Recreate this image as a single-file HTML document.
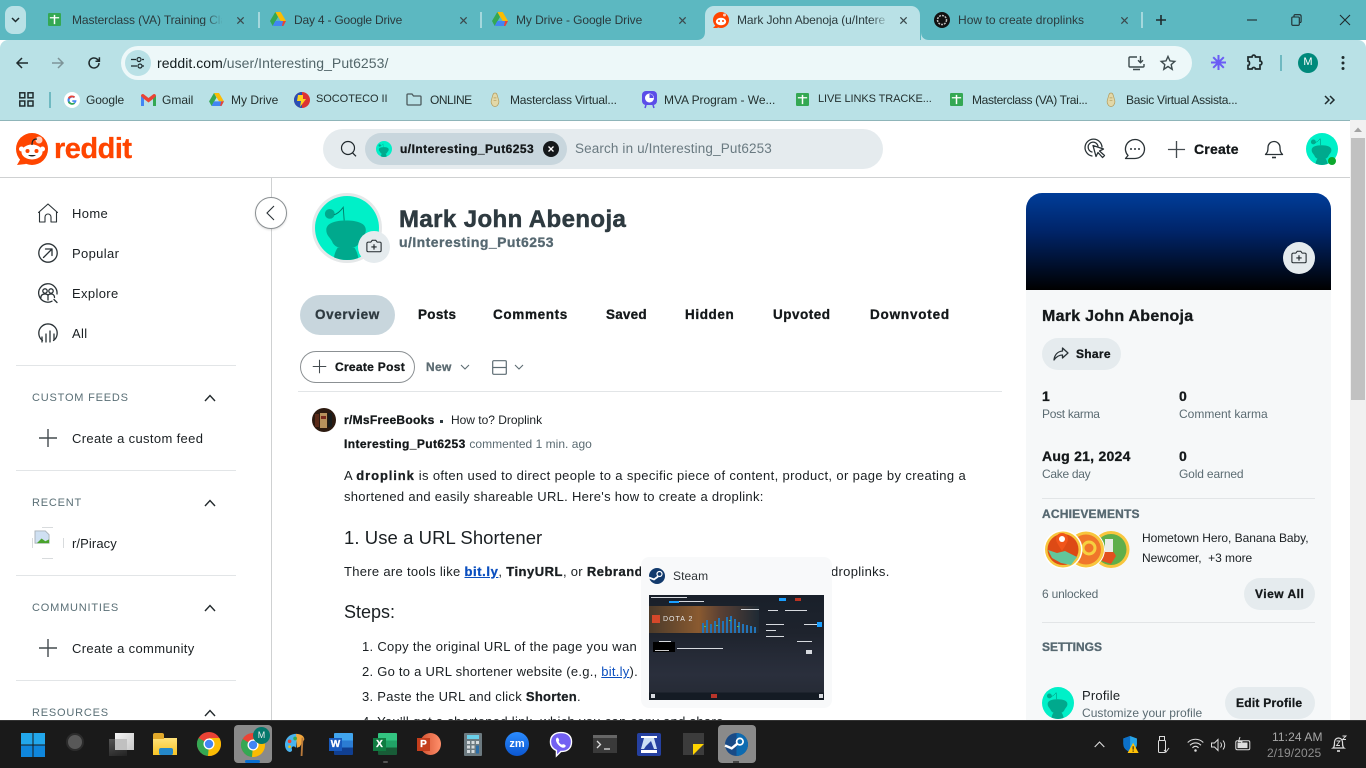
<!DOCTYPE html>
<html><head><meta charset="utf-8"><title>Mark John Abenoja</title>
<style>
*{box-sizing:border-box}
html,body{margin:0;padding:0;width:1366px;height:768px;overflow:hidden;background:#fff;font-family:"Liberation Sans","DejaVu Sans",sans-serif;color:#1a1f22}
.t{position:absolute;white-space:nowrap;line-height:1}
.a{position:absolute}
svg{position:absolute;overflow:visible}
.b,b{font-weight:700;-webkit-text-stroke:.3px currentColor}
.tab{font-size:12px;color:#2b3a3d}
.bm{font-size:12px;color:#23302f}
.nav{font-size:13px;color:#1a1f22;letter-spacing:.35px}
.sec{font-size:11px;color:#5a6f76;letter-spacing:.8px}
.hr{position:absolute;background:#e2e5e7;height:1px}
.lbl{font-size:12px;color:#5b6b72;letter-spacing:0}
.num{font-size:14px;font-weight:700;color:#14181a;-webkit-text-stroke:.3px #14181a}
.body{font-size:13px;color:#1a1f22;letter-spacing:.28px}
.pill{position:absolute;border-radius:20px;background:#e5ebee}
.ic{fill:none;stroke:#2a3236;stroke-width:1.3;stroke-linecap:round;stroke-linejoin:round}
</style></head><body>
<svg width="0" height="0" style="position:absolute"><defs>
<clipPath id="cc"><circle cx="34" cy="34" r="34"/></clipPath>
<symbol id="snoo" viewBox="0 0 68 68">
<circle cx="34" cy="34" r="34" fill="#00f0c8"/>
<circle cx="15.700" cy="19" r="5.200" fill="#00a98d"/>
<path d="M20 20C24 19 27 16 30 12L31 26" fill="none" stroke="#00806c" stroke-width="1"/>
<g clip-path="url(#cc)"><path d="M12 36C12 29 21 26 33 26C45 26 54 29 54 36C54 42 50 44 48 48C46 54 40 56 33 56C26 56 20 54 18 48C16 44 12 42 12 36z" fill="#00a98d"/>
<path d="M24 55C21 60 20 64 20 68H46C46 64 45 60 42 55z" fill="#00a98d"/></g>
</symbol>
<symbol id="sheet" viewBox="0 0 14 14"><rect width="14" height="14" rx="1.2" fill="#34a853"/><path d="M6.2 2v10h1.6V5.8H12V4.4H7.8V2zM2 4.4h4.2v1.4H2z" fill="#fff"/></symbol>
<symbol id="drive" viewBox="0 0 16 14"><path d="M5.3 0h5.4l5.3 9h-5.3z" fill="#fbbc04"/><path d="M5.3 0 0 9l2.7 5 5.3-9z" fill="#34a853"/><path d="M2.7 14h10.600l2.700-5H5.300z" fill="#4285f4"/><path d="M12 14h1.300l2.700-5h-3z" fill="#ea4335"/></symbol>
<symbol id="cam" viewBox="0 0 18 16"><path d="M1 4.500c0-.8.6-1.400 1.400-1.400h3L7 1h4l1.600 2.100h3c.8 0 1.400.6 1.400 1.400v8c0 .8-.6 1.400-1.400 1.400H2.400c-.8 0-1.400-.6-1.400-1.400z" fill="none" stroke="#20282c" stroke-width="1.200"/><path d="M9 5.500v6M6 8.500h6" stroke="#20282c" stroke-width="1.300"/></symbol>
<symbol id="plus" viewBox="0 0 20 20"><path d="M10 1v18M1 10h18" stroke="#444b4f" stroke-width="1.400"/></symbol>
<symbol id="up" viewBox="0 0 12 8"><path d="M1 7l5-5.500L11 7" fill="none" stroke="#22292c" stroke-width="1.400"/></symbol>
<symbol id="down" viewBox="0 0 10 6"><path d="M1 1l4 4 4-4" fill="none" stroke="#5d6c73" stroke-width="1.100"/></symbol>
<symbol id="x" viewBox="0 0 10 10"><path d="M1.500 1.500l7 7M8.500 1.500l-7 7" stroke="#3b4a4d" stroke-width="1.400"/></symbol>
<symbol id="gem" viewBox="0 0 20 22"><path d="M10 1c3 0 3 3 4 6 1 4 3 7 0 11-2 3-6 3-8 0-3-4-1-7 0-11 1-3 1-6 4-6z" fill="#e2d8a8" stroke="#b39b5b"/><path d="M8 8h4M8 12h4" stroke="#b39b5b"/></symbol>
</defs></svg>

<!-- TAB STRIP -->
<div class="a" style="left:0;top:0;width:1366px;height:40px;background:#5cb8c1"></div>
<div class="a" style="left:5px;top:6px;width:21px;height:28px;background:#b9e1e6;border-radius:8px"></div>
<svg style="left:11px;top:17px" width="9" height="6" viewBox="0 0 9 6"><path d="M1 1l3.500 3.500L8 1" fill="none" stroke="#1f2b2d" stroke-width="1.500"/></svg>
<svg style="left:48px;top:12px" width="13" height="15"><use href="#sheet" width="13" height="15"/></svg>
<div class="t tab" style="left:72px;top:14px;width:150px;overflow:hidden;letter-spacing:-.1px">Masterclass (VA) Training Cla</div>
<div class="a" style="left:205px;top:10px;width:18px;height:20px;background:linear-gradient(90deg,rgba(92,184,193,0),#5cb8c1)"></div>
<svg style="left:236px;top:16px" width="9" height="9"><use href="#x" width="9" height="9"/></svg>
<div class="a" style="left:258px;top:12px;width:2px;height:16px;background:#a5d8dd"></div>
<svg style="left:270px;top:12px" width="16" height="14"><use href="#drive" width="16" height="14"/></svg>
<div class="t tab" style="left:294px;top:14px;letter-spacing:-.2px">Day 4 - Google Drive</div>
<svg style="left:459px;top:16px" width="9" height="9"><use href="#x" width="9" height="9"/></svg>
<div class="a" style="left:480px;top:12px;width:2px;height:16px;background:#a5d8dd"></div>
<svg style="left:492px;top:12px" width="16" height="14"><use href="#drive" width="16" height="14"/></svg>
<div class="t tab" style="left:516px;top:14px;letter-spacing:-.08px">My Drive - Google Drive</div>
<svg style="left:678px;top:16px" width="9" height="9"><use href="#x" width="9" height="9"/></svg>
<!-- active tab -->
<div class="a" style="left:705px;top:6px;width:215px;height:34px;background:#b9e1e6;border-radius:9px 9px 0 0"></div>
<svg style="left:697px;top:32px" width="232" height="8"><path d="M0 8c5 0 8-3 8-8v8zM232 8c-5 0-8-3-8-8v8z" fill="#b9e1e6"/></svg>
<svg style="left:713px;top:12px" width="16" height="16" viewBox="0 0 16 16"><circle cx="8" cy="8" r="8" fill="#ff4500"/><path d="M0 16l3-3 2 3z" fill="#ff4500"/><ellipse cx="8" cy="9.500" rx="5.200" ry="3.800" fill="#fff"/><circle cx="6" cy="9" r="1" fill="#ff4500"/><circle cx="10" cy="9" r="1" fill="#ff4500"/><circle cx="11.500" cy="3" r="1.500" fill="#ffd0c0"/></svg>
<div class="t tab" style="left:737px;top:14px;width:152px;overflow:hidden;letter-spacing:-.1px">Mark John Abenoja (u/Intere</div>
<div class="a" style="left:870px;top:10px;width:20px;height:20px;background:linear-gradient(90deg,rgba(185,225,230,0),#b9e1e6)"></div>
<svg style="left:899px;top:16px" width="9" height="9"><use href="#x" width="9" height="9"/></svg>
<svg style="left:934px;top:12px" width="16" height="16" viewBox="0 0 16 16"><circle cx="8" cy="8" r="8" fill="#111"/><circle cx="8" cy="8" r="4.500" fill="none" stroke="#bbb" stroke-width="1.500" stroke-dasharray="2 1"/></svg>
<div class="t tab" style="left:958px;top:14px;letter-spacing:.03px">How to create droplinks</div>
<svg style="left:1120px;top:16px" width="9" height="9"><use href="#x" width="9" height="9"/></svg>
<div class="a" style="left:1141px;top:12px;width:2px;height:16px;background:#a5d8dd"></div>
<svg style="left:1155px;top:14px" width="12" height="12"><path d="M6 1v10M1 6h10" stroke="#1f2b2d" stroke-width="1.600"/></svg>
<svg style="left:1247px;top:14px" width="60" height="14"><path d="M0 6h10" stroke="#1f2b2d" stroke-width="1.100"/></svg>
<svg style="left:1291px;top:14px" width="12" height="12"><rect x=".8" y="3" width="7.500" height="8.300" rx="1" fill="none" stroke="#1f2b2d" stroke-width="1.100"/><path d="M3 3V1.800C3 1 3.500.7 4 .7h4.500c1 0 1.600.6 1.600 1.600v5.200c0 .6-.5 1-1.200 1" fill="none" stroke="#1f2b2d" stroke-width="1.100"/></svg>
<svg style="left:1339px;top:14px" width="12" height="12"><path d="M1 1l10 10M11 1L1 11" stroke="#1f2b2d" stroke-width="1.100"/></svg>

<!-- TOOLBAR -->
<div class="a" style="left:0;top:40px;width:1366px;height:80px;background:#b9e1e6;border-radius:8px 8px 0 0"></div>
<svg style="left:15px;top:56px" width="14" height="14"><path d="M13 7H2M7 2 2 7l5 5" fill="none" stroke="#1f2b2d" stroke-width="1.500"/></svg>
<svg style="left:51px;top:56px" width="14" height="14"><path d="M1 7h11M7 2l5 5-5 5" fill="none" stroke="#7d9498" stroke-width="1.500"/></svg>
<svg style="left:87px;top:56px" width="14" height="14"><path d="M12 7a5 5 0 1 1-1.600-3.700L12.200 5M12.400 1.300v3.900H8.500" fill="none" stroke="#1f2b2d" stroke-width="1.500"/></svg>
<div class="a" style="left:121px;top:46px;width:1071px;height:34px;background:#edf8f9;border-radius:17px"></div>
<div class="a" style="left:125px;top:50px;width:26px;height:26px;background:#b9e1e6;border-radius:13px"></div>
<svg style="left:131px;top:57px" width="14" height="12"><path d="M0 2.500h5M11 9h2M0 9h6M11 2.500h2" stroke="#1f2b2d" stroke-width="1.200"/><circle cx="8" cy="2.500" r="2" fill="none" stroke="#1f2b2d" stroke-width="1.200"/><circle cx="9" cy="9" r="2" fill="none" stroke="#1f2b2d" stroke-width="1.200"/></svg>
<div class="t" style="left:157px;top:56px;font-size:14px;color:#121c1e;letter-spacing:.05px">reddit.com<span style="color:#52666a">/user/Interesting_Put6253/</span></div>
<svg style="left:1128px;top:55px" width="17" height="16"><path d="M9 2H2a1 1 0 0 0-1 1v8a1 1 0 0 0 1 1h13a1 1 0 0 0 1-1V9M5 14.500h7M12.500 1v6.500M10 5.200l2.500 2.500L15 5.200" fill="none" stroke="#3c4a4d" stroke-width="1.400"/></svg>
<svg style="left:1160px;top:55px" width="16" height="16"><path d="M8 1.500l2 4.400 4.800.5-3.600 3.200 1 4.700L8 11.500l-4.200 2.800 1-4.700L1.200 6.400 6 5.900z" fill="none" stroke="#3c4a4d" stroke-width="1.400"/></svg>
<svg style="left:1210px;top:54px" width="17" height="17" viewBox="0 0 17 17"><g stroke="#6a5cf5" stroke-width="2"><path d="M8.500 1v15M1 8.500h15M3.200 3.200l10.600 10.600M13.800 3.200 3.200 13.800"/></g><circle cx="8.500" cy="8.500" r="3" fill="#6a5cf5"/></svg>
<svg style="left:1246px;top:54px" width="17" height="17"><path d="M2 3h4c0-2.500 3.500-2.500 3.500 0h4.500v4c2.500 0 2.500 4 0 4v4H9.500c0-2-3.500-2-3.500 0H2v-3.500c2 0 2-4.500 0-4.500z" fill="none" stroke="#1f2b2d" stroke-width="1.700"/></svg>
<div class="a" style="left:1280px;top:55px;width:2px;height:16px;background:#6fb9c1"></div>
<div class="a" style="left:1298px;top:53px;width:20px;height:20px;border-radius:50%;background:#00897b"></div>
<div class="t" style="left:1298px;top:57px;width:20px;text-align:center;font-size:11px;color:#fff">M</div>
<svg style="left:1341px;top:55px" width="4" height="16"><circle cx="2" cy="2.500" r="1.500" fill="#1f2b2d"/><circle cx="2" cy="8" r="1.500" fill="#1f2b2d"/><circle cx="2" cy="13.500" r="1.500" fill="#1f2b2d"/></svg>

<!-- BOOKMARKS -->
<svg style="left:19px;top:92px" width="15" height="15"><g fill="none" stroke="#1f2b2d" stroke-width="1.500"><rect x=".8" y=".8" width="5" height="5"/><rect x="9" y=".8" width="5" height="5"/><rect x=".8" y="9" width="5" height="5"/><rect x="9" y="9" width="5" height="5"/></g></svg>
<div class="a" style="left:49px;top:92px;width:2px;height:16px;background:#6fb9c1"></div>
<svg style="left:64px;top:92px" width="16" height="16" viewBox="0 0 16 16"><circle cx="8" cy="8" r="8" fill="#fff"/><path d="M12.500 8.200H8.300v1.700h2.400a2.800 2.800 0 1 1-.8-3.900l1.200-1.200A4.500 4.500 0 1 0 12.500 8.200z" fill="#4285f4"/><path d="M4 5.800A4.500 4.500 0 0 1 11.100 4.800L9.900 6A2.800 2.800 0 0 0 5.500 7z" fill="#ea4335"/><path d="M3.900 10.200 5.300 9a2.800 2.800 0 0 0 4.400 1.500l1.200 1.200a4.500 4.500 0 0 1-7-1.500z" fill="#34a853"/></svg>
<div class="t bm" style="left:86px;top:94px;letter-spacing:-.1px">Google</div>
<svg style="left:141px;top:94px" width="15" height="12" viewBox="0 0 15 12"><path d="M0 2v10h3V5l4.500 3.500L12 5v7h3V2c0-2-2-2.500-3-1.500L7.500 4 3 .5C2-.5 0 0 0 2z" fill="#ea4335"/><path d="M0 2v10h3V5z" fill="#4285f4"/><path d="M12 5v7h3V2z" fill="#34a853"/></svg>
<div class="t bm" style="left:162px;top:94px">Gmail</div>
<svg style="left:209px;top:93px" width="15" height="13"><use href="#drive" width="15" height="13"/></svg>
<div class="t bm" style="left:231px;top:94px">My Drive</div>
<svg style="left:294px;top:92px" width="16" height="16" viewBox="0 0 16 16"><circle cx="8" cy="8" r="8" fill="#d33"/><path d="M0 8a8 8 0 0 1 8-8v16A8 8 0 0 1 0 8z" fill="#2a4fb5"/><path d="M4 3h5v4h3l-6 8 1-6H3z" fill="#ffd21f"/></svg>
<div class="t bm" style="left:316px;top:94px;font-size:11px;letter-spacing:-.05px">SOCOTECO II</div>
<svg style="left:406px;top:93px" width="16" height="13"><path d="M1 2c0-.5.3-1 1-1h4l1.500 2H14c.6 0 1 .4 1 1v7c0 .6-.4 1-1 1H2c-.6 0-1-.4-1-1z" fill="none" stroke="#4c5a5d" stroke-width="1.300"/></svg>
<div class="t bm" style="left:430px;top:94px;letter-spacing:-.5px">ONLINE</div>
<svg style="left:488px;top:92px" width="14" height="16"><use href="#gem" width="14" height="16"/></svg>
<div class="t bm" style="left:510px;top:94px;letter-spacing:-.2px">Masterclass Virtual...</div>
<svg style="left:641px;top:91px" width="17" height="17" viewBox="0 0 17 17"><rect x="1" y="0" width="15" height="14" rx="4" fill="#5b4de8"/><circle cx="8.500" cy="7" r="4.500" fill="#fff"/><path d="M8.500 7V3a4 4 0 0 1 4 4z" fill="#5b4de8"/><path d="M5 14l-1 3M12 14l1 3" stroke="#5b4de8" stroke-width="1.500"/></svg>
<div class="t bm" style="left:664px;top:94px;letter-spacing:-.05px">MVA Program - We...</div>
<svg style="left:796px;top:92px" width="13" height="15"><use href="#sheet" width="13" height="15"/></svg>
<div class="t bm" style="left:818px;top:94px;font-size:11px;letter-spacing:-.08px">LIVE LINKS TRACKE...</div>
<svg style="left:950px;top:92px" width="13" height="15"><use href="#sheet" width="13" height="15"/></svg>
<div class="t bm" style="left:972px;top:94px;letter-spacing:-.35px">Masterclass (VA) Trai...</div>
<svg style="left:1104px;top:92px" width="14" height="16"><use href="#gem" width="14" height="16"/></svg>
<div class="t bm" style="left:1126px;top:94px;letter-spacing:-.27px">Basic Virtual Assista...</div>
<svg style="left:1324px;top:95px" width="12" height="10"><path d="M1 1l4 4-4 4M6 1l4 4-4 4" fill="none" stroke="#1f2b2d" stroke-width="1.500"/></svg>

<!-- REDDIT HEADER -->
<div class="a" style="left:0;top:120px;width:1350px;height:1px;background:#8fb5b9"></div>
<div class="a" style="left:0;top:177px;width:1350px;height:1px;background:#cfd1d2"></div>
<svg style="left:16px;top:133px" width="32" height="32" viewBox="0 0 32 32"><circle cx="16" cy="16" r="16" fill="#ff4500"/><path d="M1 32l4-7 5 6z" fill="#ff4500"/><ellipse cx="16" cy="19" rx="10.500" ry="7.500" fill="#fff"/><circle cx="5.500" cy="16" r="2.500" fill="#fff"/><circle cx="26.500" cy="16" r="2.500" fill="#fff"/><circle cx="11.500" cy="18" r="2" fill="#ff4500"/><circle cx="20.500" cy="18" r="2" fill="#ff4500"/><path d="M12 22c2 2 6 2 8 0z" fill="#222"/><circle cx="23" cy="7" r="3.500" fill="#ffd0c0"/><path d="M16 12c0-4 1-6 5-6" fill="none" stroke="#222" stroke-width="1.200"/></svg>
<div class="t b" style="left:54px;top:135px;font-size:29px;color:#ff4500;letter-spacing:-.5px">reddit</div>

<div class="a" style="left:323px;top:129px;width:560px;height:40px;border-radius:20px;background:#e5ebee"></div>
<svg style="left:340px;top:140px" width="18" height="18"><circle cx="8" cy="8" r="6.500" fill="none" stroke="#20282c" stroke-width="1.200"/><path d="M12.500 12.800l3.500 3.500" stroke="#20282c" stroke-width="1.200"/></svg>
<div class="a" style="left:365px;top:133px;width:202px;height:32px;border-radius:16px;background:#c8d6dd"></div>
<svg style="left:376px;top:141px" width="16" height="16"><use href="#snoo" width="16" height="16"/></svg>
<div class="t b" style="left:400px;top:143px;font-size:12px;color:#14181a;letter-spacing:.45px">u/Interesting_Put6253</div>
<div class="a" style="left:543px;top:141px;width:16px;height:16px;border-radius:50%;background:#14181a"></div>
<svg style="left:548px;top:146px" width="6" height="6"><path d="M.5.500l5 5M5.500.500l-5 5" stroke="#fff" stroke-width="1.300"/></svg>
<div class="t" style="left:575px;top:142px;font-size:13.500px;color:#6a7a81;letter-spacing:.13px">Search in u/Interesting_Put6253</div>

<svg style="left:1084px;top:138px" width="22" height="22" viewBox="0 0 22 22"><g class="ic"><path d="M8 18a8.500 8.500 0 1 1 10-9"/><path d="M8 14a5 5 0 1 1 6-6"/><path d="M9 7.500l3 11 2-4 4.500 5 2-2-5-4.500 4-2z"/></g></svg>
<svg style="left:1124px;top:138px" width="22" height="22" viewBox="0 0 22 22"><path class="ic" d="M11 1.500a9.500 9.500 0 1 1 0 19H1.500l2.500-3A9.500 9.500 0 0 1 11 1.500z"/><circle cx="7" cy="11" r="1" fill="#2a3236"/><circle cx="11" cy="11" r="1" fill="#2a3236"/><circle cx="15" cy="11" r="1" fill="#2a3236"/></svg>
<svg style="left:1167px;top:140px" width="19" height="19"><use href="#plus" width="19" height="19"/></svg>
<div class="t b" style="left:1194px;top:142px;font-size:14px;color:#14181a;letter-spacing:.2px">Create</div>
<svg style="left:1264px;top:139px" width="20" height="20" viewBox="0 0 20 20"><path class="ic" d="M1.500 15.500c2-2 2.500-3.500 2.500-7a6 6 0 0 1 12 0c0 3.500.5 5 2.500 7z"/><path d="M8 18.500h4" stroke="#2a3236" stroke-width="1.600"/></svg>
<svg style="left:1306px;top:133px" width="32" height="32"><use href="#snoo" width="32" height="32"/></svg>
<div class="a" style="left:1328px;top:157px;width:8px;height:8px;border-radius:50%;background:#0ca82d"></div>

<!-- SIDEBAR -->
<div class="a" style="left:271px;top:178px;width:1px;height:542px;background:#cfd1d2"></div>
<div class="a" style="left:255px;top:197px;width:32px;height:32px;border-radius:50%;background:#fff;border:1px solid #8b9093;box-shadow:0 1px 2px rgba(0,0,0,.15)"></div>
<svg style="left:266px;top:205px" width="9" height="16"><path d="M8 1 1 8l7 7" fill="none" stroke="#2a3236" stroke-width="1.100"/></svg>
<svg style="left:38px;top:203px" width="20" height="20" viewBox="0 0 20 20"><path class="ic" style="stroke-width:1.100" d="M.5 9.500 10 1l9.500 8.500M1.500 9v10h5.500v-5a3 3 0 0 1 6 0v5h5.500V9"/></svg>
<div class="t nav" style="left:72px;top:207px">Home</div>
<svg style="left:38px;top:243px" width="20" height="20" viewBox="0 0 20 20"><circle class="ic" cx="10" cy="10" r="9.200"/><path class="ic" d="M5.500 14.500l8.500-8.500M7.500 6H14v6.500"/></svg>
<div class="t nav" style="left:72px;top:247px">Popular</div>
<svg style="left:38px;top:283px" width="20" height="20" viewBox="0 0 20 20"><path class="ic" d="M14 18.200A9.200 9.200 0 1 1 19 11"/><circle class="ic" cx="7" cy="8" r="2.200"/><circle class="ic" cx="13" cy="8" r="2.200"/><path class="ic" d="M2.800 15c0-3 2-4 4.200-4 1.300 0 2.300.4 3 1.200.7-.8 1.700-1.200 3-1.200 2.200 0 3.500 1.400 3.500 3.500M10 12.500V17M16 16.500l3 3"/></svg>
<div class="t nav" style="left:72px;top:287px">Explore</div>
<svg style="left:38px;top:323px" width="20" height="20" viewBox="0 0 20 20"><path class="ic" d="M4.500 17.500a9.200 9.200 0 1 1 11 0"/><path class="ic" d="M4 14v5M8 11v8M12 8v11M16 11v6"/></svg>
<div class="t nav" style="left:72px;top:327px">All</div>
<div class="hr" style="left:16px;top:365px;width:220px"></div>
<div class="t sec" style="left:32px;top:393px">CUSTOM FEEDS</div>
<svg style="left:204px;top:394px" width="12" height="8"><use href="#up" width="12" height="8"/></svg>
<svg style="left:38px;top:428px" width="20" height="20"><use href="#plus" width="20" height="20"/></svg>
<div class="t nav" style="left:72px;top:432px">Create a custom feed</div>
<div class="hr" style="left:16px;top:470px;width:220px"></div>
<div class="t sec" style="left:32px;top:498px">RECENT</div>
<svg style="left:204px;top:499px" width="12" height="8"><use href="#up" width="12" height="8"/></svg>
<svg style="left:32px;top:527px" width="32" height="32"><path d="M10 .5h11M10 31.500h11M.5 11v10M31.500 11v10" stroke="#d8dbdd" stroke-width="1" fill="none"/></svg>
<svg style="left:34px;top:530px" width="17" height="15" viewBox="0 0 18 16"><path d="M1 1h11l4 4v9H1z" fill="#cfe0f2" stroke="#a9b2b8"/><path d="M3 14l5-5 4 3 4-2v4z" fill="#4aa32c"/></svg>
<div class="t nav" style="left:72px;top:537px;letter-spacing:.1px">r/Piracy</div>
<div class="hr" style="left:16px;top:575px;width:220px"></div>
<div class="t sec" style="left:32px;top:603px">COMMUNITIES</div>
<svg style="left:204px;top:604px" width="12" height="8"><use href="#up" width="12" height="8"/></svg>
<svg style="left:38px;top:638px" width="20" height="20"><use href="#plus" width="20" height="20"/></svg>
<div class="t nav" style="left:72px;top:642px">Create a community</div>
<div class="hr" style="left:16px;top:680px;width:220px"></div>
<div class="t sec" style="left:32px;top:708px">RESOURCES</div>
<svg style="left:204px;top:709px" width="12" height="8"><use href="#up" width="12" height="8"/></svg>

<!-- PROFILE HEAD -->
<div class="a" style="left:312px;top:193px;width:70px;height:70px;border-radius:50%;background:#e5e8e9"></div>
<svg style="left:315px;top:196px" width="64" height="64"><use href="#snoo" width="64" height="64"/></svg>
<div class="a" style="left:358px;top:231px;width:32px;height:32px;border-radius:50%;background:#e5ebee"></div>
<svg style="left:366px;top:239px" width="16" height="15"><use href="#cam" width="16" height="15"/></svg>
<div class="t b" style="left:399px;top:208px;font-size:24px;color:#2e3a40;letter-spacing:.4px;-webkit-text-stroke:.5px #2e3a40">Mark John Abenoja</div>
<div class="t b" style="left:399px;top:235px;font-size:14px;color:#566871;letter-spacing:.45px">u/Interesting_Put6253</div>

<div class="pill" style="left:300px;top:295px;width:95px;height:40px;background:#c8d6dd"></div>
<div class="t b" style="left:315px;top:308px;font-size:13.500px;color:#2e3a40;letter-spacing:.6px">Overview</div>
<div class="t b" style="left:418px;top:308px;font-size:13.500px;color:#14181a;letter-spacing:.3px">Posts</div>
<div class="t b" style="left:493px;top:308px;font-size:13.500px;color:#14181a;letter-spacing:.65px">Comments</div>
<div class="t b" style="left:606px;top:308px;font-size:13.500px;color:#14181a;letter-spacing:.2px">Saved</div>
<div class="t b" style="left:685px;top:308px;font-size:13.500px;color:#14181a;letter-spacing:.6px">Hidden</div>
<div class="t b" style="left:773px;top:308px;font-size:13.500px;color:#14181a;letter-spacing:.5px">Upvoted</div>
<div class="t b" style="left:870px;top:308px;font-size:13.500px;color:#14181a;letter-spacing:.8px">Downvoted</div>

<div class="a" style="left:300px;top:351px;width:115px;height:32px;border-radius:16px;border:1px solid #8b9093;background:#fff"></div>
<svg style="left:312px;top:359px" width="15" height="15"><use href="#plus" width="15" height="15"/></svg>
<div class="t b" style="left:335px;top:361px;font-size:12px;color:#14181a;letter-spacing:.3px">Create Post</div>
<div class="t b" style="left:426px;top:361px;font-size:12px;color:#5d6c73;letter-spacing:.3px">New</div>
<svg style="left:460px;top:364px" width="10" height="6"><use href="#down" width="10" height="6"/></svg>
<svg style="left:492px;top:360px" width="15" height="15"><rect x=".7" y=".7" width="13.600" height="13.600" rx="1" fill="none" stroke="#5d6c73" stroke-width="1.200"/><path d="M.7 7.500h13.600" stroke="#5d6c73" stroke-width="1.200"/></svg>
<svg style="left:514px;top:364px" width="10" height="6"><use href="#down" width="10" height="6"/></svg>
<div class="hr" style="left:298px;top:391px;width:704px"></div>

<!-- POST -->
<svg style="left:312px;top:408px" width="24" height="24" viewBox="0 0 24 24"><circle cx="12" cy="12" r="12" fill="#2c1a10"/><rect x="8" y="5" width="7" height="15" fill="#b8925c"/><rect x="9" y="8" width="5" height="3" fill="#7a2a1c"/><rect x="3" y="6" width="4" height="13" fill="#5a2a18"/><rect x="16" y="5" width="4" height="14" fill="#181c1c"/></svg>
<div class="t b" style="left:344px;top:414px;font-size:12px;color:#14181a;letter-spacing:.3px">r/MsFreeBooks</div>
<div class="a" style="left:440px;top:420px;width:3px;height:3px;background:#2e3a40"></div>
<div class="t" style="left:451px;top:414px;font-size:12px;color:#1a1f22;letter-spacing:-.02px">How to? Droplink</div>
<div class="t b" style="left:344px;top:438px;font-size:12px;color:#14181a;letter-spacing:.4px">Interesting_Put6253 <span style="font-weight:400;color:#5b6b72;letter-spacing:.02px;-webkit-text-stroke:0">commented 1 min. ago</span></div>
<div class="t body" style="left:344px;top:469px;letter-spacing:.36px">A <b style="letter-spacing:.9px">droplink</b> is often used to direct people to a specific piece of content, product, or page by creating a</div>
<div class="t body" style="left:344px;top:490px;letter-spacing:.29px">shortened and easily shareable URL. Here's how to create a droplink:</div>
<div class="t" style="left:344px;top:529px;font-size:18.500px;color:#1a1f22;letter-spacing:.07px">1. Use a URL Shortener</div>
<div class="t body" style="left:344px;top:565px;letter-spacing:.3px">There are tools like <b style="color:#0b4fbf;text-decoration:underline;letter-spacing:.6px">bit.ly</b>, <b style="letter-spacing:.5px">TinyURL</b>, or <b style="letter-spacing:.5px">Rebrandly</b></div>
<div class="t body" style="left:831px;top:565px;letter-spacing:.3px">droplinks.</div>
<div class="t" style="left:344px;top:603px;font-size:18px;color:#1a1f22">Steps:</div>
<div class="t body" style="left:362px;top:640px;letter-spacing:.3px">1. Copy the original URL of the page you wan</div>
<div class="t body" style="left:362px;top:665px;letter-spacing:.25px">2. Go to a URL shortener website (e.g., <span style="color:#0b4fbf;text-decoration:underline">bit.ly</span>).</div>
<div class="t body" style="left:362px;top:690px;letter-spacing:.28px">3. Paste the URL and click <b>Shorten</b>.</div>
<div class="t body" style="left:362px;top:715px;letter-spacing:.3px">4. You'll get a shortened link, which you can copy and share.</div>

<!-- STEAM PREVIEW -->
<div class="a" style="left:641px;top:557px;width:191px;height:151px;background:#f8f9fa;border-radius:8px"></div>
<svg style="left:649px;top:568px" width="16" height="16" viewBox="0 0 16 16"><circle cx="8" cy="8" r="8" fill="#123a6c"/><circle cx="10.500" cy="6" r="2.500" fill="none" stroke="#fff" stroke-width="1.200"/><path d="M0 9.500l5 2 4-3" stroke="#fff" stroke-width="1.800" fill="none"/></svg>
<div class="t" style="left:673px;top:570px;font-size:12px;color:#2e3336;letter-spacing:.1px">Steam</div>
<div class="a" style="left:649px;top:595px;width:175px;height:105px;background:linear-gradient(180deg,#19202a 0,#1e232d 38px,#252a36 60px,#2a2f3c 80px,#262b36 97px,#141b24 98px)"></div>
<div class="a" style="left:649px;top:606px;width:110px;height:27px;background:linear-gradient(90deg,#4a3a2a,#8a5a30 45%,#5a4034 65%,#1f2a34)"></div>
<div class="a" style="left:652px;top:615px;width:8px;height:8px;background:#d5482a"></div>
<div class="t" style="left:663px;top:616px;font-size:7px;color:#e8e8e8;letter-spacing:1px">DOTA 2</div>
<svg style="left:649px;top:595px" width="175" height="105">
<g fill="#2274b8"><rect x="53" y="28" width="2" height="10"/><rect x="57" y="25" width="2" height="13"/><rect x="61" y="29" width="2" height="9"/><rect x="65" y="26" width="2" height="12"/><rect x="69" y="23" width="2" height="15"/><rect x="73" y="26" width="2" height="12"/><rect x="77" y="22" width="2" height="16"/><rect x="81" y="21" width="2" height="17"/><rect x="85" y="24" width="2" height="14"/><rect x="89" y="27" width="2" height="11"/><rect x="93" y="29" width="2" height="9"/><rect x="97" y="30" width="2" height="8"/><rect x="101" y="31" width="2" height="7"/><rect x="105" y="32" width="2" height="6"/></g>
<g fill="#5fc24a"><rect x="55" y="31" width="2" height="1"/><rect x="67" y="30" width="2" height="1"/><rect x="80" y="25" width="2" height="1"/><rect x="88" y="31" width="2" height="1"/></g>
<g fill="#d7dadf"><rect x="2" y="2" width="36" height="1"/><rect x="30" y="6" width="25" height="1"/><rect x="92" y="14" width="18" height="1"/><rect x="119" y="15" width="10" height="1"/><rect x="136" y="15" width="22" height="1"/><rect x="117" y="29" width="18" height="1"/><rect x="117" y="35" width="10" height="1"/><rect x="117" y="41" width="18" height="1"/><rect x="155" y="29" width="14" height="1"/><rect x="10" y="46" width="12" height="1"/><rect x="148" y="46" width="15" height="1"/><rect x="28" y="53" width="46" height="1"/><rect x="157" y="55" width="6" height="4"/><rect x="2" y="99" width="4" height="4"/><rect x="170" y="99" width="4" height="4"/></g>
<rect x="130" y="3" width="7" height="3" fill="#1a9fff"/><rect x="146" y="3" width="6" height="3" fill="#b32"/><rect x="168" y="27" width="5" height="5" fill="#1a9fff"/><rect x="20" y="6" width="10" height="2" fill="#1a9fff"/>
<rect x="4" y="47" width="22" height="10" fill="#000"/><rect x="6" y="55" width="14" height="1" fill="#ccc"/>
<rect x="62" y="99" width="6" height="4" fill="#b8342a"/>
</svg>

<!-- RIGHT PANEL -->
<div class="a" style="left:1026px;top:193px;width:305px;height:97px;border-radius:16px 16px 0 0;background:linear-gradient(180deg,#003d99 0,#002468 40%,#000 100%)"></div>
<div class="a" style="left:1026px;top:290px;width:305px;height:430px;background:#f6f8f9"></div>
<div class="a" style="left:1283px;top:242px;width:32px;height:32px;border-radius:50%;background:#e5ebee"></div>
<svg style="left:1291px;top:250px" width="16" height="15"><use href="#cam" width="16" height="15"/></svg>
<div class="t b" style="left:1042px;top:309px;font-size:16px;color:#14181a;letter-spacing:.26px">Mark John Abenoja</div>
<div class="pill" style="left:1042px;top:338px;width:79px;height:32px"></div>
<svg style="left:1053px;top:347px" width="16" height="15" viewBox="0 0 16 15"><path class="ic" d="M9.500 1l5.500 5-5.500 5V8C6 8 3.500 9.500 1 13c.5-5 3.500-8.500 8.500-9z"/></svg>
<div class="t b" style="left:1076px;top:348px;font-size:12px;color:#14181a;letter-spacing:.3px">Share</div>
<div class="t num" style="left:1042px;top:389px">1</div>
<div class="t lbl" style="left:1042px;top:408px;letter-spacing:-.3px">Post karma</div>
<div class="t num" style="left:1179px;top:389px">0</div>
<div class="t lbl" style="left:1179px;top:408px">Comment karma</div>
<div class="t num" style="left:1042px;top:449px;letter-spacing:.25px">Aug 21, 2024</div>
<div class="t lbl" style="left:1042px;top:468px;letter-spacing:-.3px">Cake day</div>
<div class="t num" style="left:1179px;top:449px">0</div>
<div class="t lbl" style="left:1179px;top:468px;letter-spacing:-.15px">Gold earned</div>
<div class="hr" style="left:1042px;top:498px;width:273px"></div>
<div class="t b" style="left:1042px;top:508px;font-size:12px;color:#566871;letter-spacing:.2px">ACHIEVEMENTS</div>
<svg style="left:1043px;top:530px" width="87" height="39" viewBox="0 0 87 39"><circle cx="68" cy="19.500" r="18.500" fill="#f8c63d"/><circle cx="68" cy="19.500" r="15.500" fill="#5fae4a"/><path d="M55 24c5-8 14-7 18 2l-5 8-9-3z" fill="#e2501f"/><rect x="62" y="9" width="8" height="13" fill="#e9ece8"/><circle cx="43" cy="19.500" r="19" fill="#fff"/><circle cx="43" cy="19.500" r="18" fill="#f8c63d"/><circle cx="43" cy="19.500" r="15" fill="#f0762a"/><circle cx="46" cy="18" r="6" fill="none" stroke="#f6d03f" stroke-width="3"/><circle cx="20" cy="19.500" r="19.500" fill="#fff"/><circle cx="20" cy="19.500" r="18" fill="#f8c63d"/><circle cx="20" cy="19.500" r="15.500" fill="#dd4a15"/><path d="M5 20l9 3 8-2 12 6-6 8-10-2-9-5z" fill="#62c69b"/><path d="M19 3c4 0 6 3 6 6 0 3-3 7-6 12-3-5-6-9-6-12 0-3 2-6 6-6z" fill="#f1551a"/><circle cx="19" cy="9" r="3" fill="#fff"/></svg>
<div class="t" style="left:1142px;top:532px;font-size:12px;color:#1a1f22;letter-spacing:-.05px">Hometown Hero, Banana Baby,</div>
<div class="t" style="left:1142px;top:552px;font-size:12px;color:#1a1f22;letter-spacing:-.05px">Newcomer, &nbsp;+3 more</div>
<div class="t lbl" style="left:1042px;top:588px;letter-spacing:-.2px">6 unlocked</div>
<div class="pill" style="left:1244px;top:578px;width:71px;height:32px"></div>
<div class="t b" style="left:1255px;top:588px;font-size:12px;color:#14181a;letter-spacing:.5px">View All</div>
<div class="hr" style="left:1042px;top:622px;width:273px"></div>
<div class="t b" style="left:1042px;top:641px;font-size:12px;color:#566871;letter-spacing:0">SETTINGS</div>
<svg style="left:1042px;top:687px" width="32" height="32"><use href="#snoo" width="32" height="32"/></svg>
<div class="t" style="left:1082px;top:689px;font-size:13px;color:#1a1f22;letter-spacing:.2px">Profile</div>
<div class="t lbl" style="left:1082px;top:707px;letter-spacing:.04px">Customize your profile</div>
<div class="pill" style="left:1225px;top:687px;width:90px;height:32px"></div>
<div class="t b" style="left:1236px;top:697px;font-size:12px;color:#14181a;letter-spacing:.25px">Edit Profile</div>

<!-- SCROLLBAR -->
<div class="a" style="left:1350px;top:120px;width:16px;height:600px;background:#f1f1f1"></div>
<svg style="left:1354px;top:127px" width="8" height="5"><path d="M0 5l4-4.500L8 5z" fill="#a3a3a3"/></svg>
<div class="a" style="left:1351px;top:138px;width:14px;height:262px;background:#c1c1c1"></div>

<!-- TASKBAR -->
<div class="a" style="left:0;top:720px;width:1366px;height:48px;background:#1a1a1a;border-top:1px solid #333"></div>
<svg style="left:21px;top:733px" width="24" height="24"><rect width="11.500" height="11.500" fill="#22a7ec"/><rect x="12.500" width="11.500" height="11.500" fill="#22a7ec"/><rect y="12.500" width="11.500" height="11.500" fill="#0f86dc"/><rect x="12.500" y="12.500" width="11.500" height="11.500" fill="#0f86dc"/></svg>
<div class="a" style="left:66px;top:733px;width:18px;height:18px;border-radius:50%;background:#585858;border:2px solid #2c2c2c"></div>
<div class="a" style="left:115px;top:733px;width:19px;height:17px;background:linear-gradient(135deg,#f5f5f5,#c7c7c7)"></div>
<div class="a" style="left:109px;top:739px;width:18px;height:17px;background:linear-gradient(160deg,#555,#222)"></div>
<div class="a" style="left:115px;top:739px;width:12px;height:11px;background:#c0c0c0"></div>
<div class="a" style="left:153px;top:738px;width:24px;height:17px;background:linear-gradient(180deg,#ffe27a,#f7c325)"></div>
<div class="a" style="left:153px;top:733px;width:11px;height:6px;background:#e0a82a;border-radius:2px 2px 0 0"></div>
<div class="a" style="left:159px;top:748px;width:14px;height:7px;background:#2488c9;border-radius:2px"></div>
<svg style="left:197px;top:732px" width="24" height="24" viewBox="0 0 24 24"><circle cx="12" cy="12" r="12" fill="#ea4335"/><path d="M12 12 1.600 6A12 12 0 0 0 12 24l6-10z" fill="#34a853"/><path d="M12 12l-1 12A12 12 0 0 0 22.400 6H12z" fill="#fbbc04"/><circle cx="12" cy="12" r="5.500" fill="#fff"/><circle cx="12" cy="12" r="4.200" fill="#4285f4"/></svg>
<div class="a" style="left:234px;top:725px;width:38px;height:38px;border-radius:4px;background:#8a8a8a"></div>
<svg style="left:241px;top:733px" width="24" height="24" viewBox="0 0 24 24"><circle cx="12" cy="12" r="12" fill="#ea4335"/><path d="M12 12 1.600 6A12 12 0 0 0 12 24l6-10z" fill="#34a853"/><path d="M12 12l-1 12A12 12 0 0 0 22.400 6H12z" fill="#fbbc04"/><circle cx="12" cy="12" r="5.500" fill="#fff"/><circle cx="12" cy="12" r="4.200" fill="#4285f4"/></svg>
<div class="a" style="left:253px;top:727px;width:17px;height:17px;border-radius:50%;background:#05786c"></div>
<div class="t" style="left:253px;top:731px;width:17px;text-align:center;font-size:9px;color:#eee">M</div>
<div class="a" style="left:245px;top:760px;width:15px;height:3px;background:#0a6fd1;border-radius:2px"></div>
<svg style="left:285px;top:733px" width="23" height="23" viewBox="0 0 25 25"><path d="M12 1C5 1 0 6 0 13c0 6 5 9 7 7 2-2-1-3 1-5 1-1 3 0 4 1l1-15z" fill="#49b3ee"/><path d="M12 1c6 0 9 3 9 6l-5 8-3 1z" fill="#f3a73b"/><circle cx="5" cy="9" r="2" fill="#ea4335"/><circle cx="11" cy="6" r="2" fill="#34a853"/><circle cx="5" cy="15" r="1.500" fill="#fbbc04"/><path d="M18 5l-1 20h2l1-20z" fill="#b97a3b"/></svg>
<div class="a" style="left:334px;top:733px;width:19px;height:22px;border-radius:1px;background:linear-gradient(180deg,#41a5ee 33%,#2b7cd3 33%,#2b7cd3 66%,#103f91 66%)"></div>
<div class="t b a" style="left:329px;top:738px;width:13px;height:13px;background:#185abd;text-align:center;font-size:10px;color:#fff;line-height:13px">W</div>
<div class="a" style="left:378px;top:733px;width:19px;height:22px;border-radius:1px;background:linear-gradient(180deg,#33c481 33%,#21a366 33%,#21a366 66%,#185c37 66%)"></div>
<div class="t b a" style="left:373px;top:738px;width:13px;height:13px;background:#107c41;text-align:center;font-size:10px;color:#fff;line-height:13px">X</div>
<div class="a" style="left:383px;top:761px;width:5px;height:2px;background:#555;border-radius:1px"></div>
<div class="a" style="left:420px;top:733px;width:21px;height:22px;border-radius:50%;background:linear-gradient(90deg,#d35230,#ff8f6b)"></div>
<div class="t b a" style="left:417px;top:738px;width:13px;height:13px;background:#c43e1c;text-align:center;font-size:10px;color:#fff;line-height:13px">P</div>
<div class="a" style="left:464px;top:733px;width:18px;height:23px;background:#6c7a80;border-radius:1px"></div>
<div class="a" style="left:467px;top:735px;width:12px;height:4px;background:#6ad0ea"></div>
<svg style="left:467px;top:741px" width="12" height="14"><g fill="#d4dadd"><rect width="3" height="3"/><rect x="4.500" width="3" height="3"/><rect x="9" width="3" height="3"/><rect y="4.500" width="3" height="3"/><rect x="4.500" y="4.500" width="3" height="3"/><rect y="9" width="3" height="3"/><rect x="4.500" y="9" width="3" height="3"/></g><rect x="9" y="4.500" width="3" height="8" fill="#2b6ea8"/></svg>
<div class="a" style="left:505px;top:732px;width:24px;height:24px;border-radius:12px;background:linear-gradient(180deg,#2b8cff,#0b56d0)"></div>
<div class="t b" style="left:505px;top:739px;width:24px;text-align:center;font-size:11px;color:#fff;-webkit-text-stroke:0">zm</div>
<svg style="left:550px;top:732px" width="22" height="25" viewBox="0 0 24 27"><path d="M12 .5c7 0 11.500 3.500 11.500 10 0 7-4.500 11-11.500 10.500L7 26v-6C2.500 18 .5 15 .5 10.500.5 4 5 .5 12 .5z" fill="#7360f2" stroke="#fff" stroke-width="1.500"/><path d="M8 6c1 0 2 2 2 3s-1 1 0 2.500 2.500 2.500 3.500 2 1.500-.5 3 .5 0 3-2 3C11 17 6 11 6.500 8 6.700 7 7.300 6 8 6z" fill="#fff"/></svg>
<div class="a" style="left:593px;top:735px;width:24px;height:18px;background:#3a3a3a;border-top:3px solid #666"></div>
<svg style="left:597px;top:741px" width="16" height="10"><path d="M0 0l3.500 3.500L0 7" fill="none" stroke="#ddd" stroke-width="1.300"/><path d="M7 8h6" stroke="#ddd" stroke-width="1.300"/></svg>
<div class="a" style="left:637px;top:733px;width:24px;height:23px;background:#2540a0;border-radius:2px"></div>
<svg style="left:641px;top:736px" width="16" height="17"><path d="M0 0h16v2H0z" fill="#fff"/><path d="M3 2h10l3 11H0z" fill="#cde0f5"/><path d="M5 10l5-5 3 8H3z" fill="#2540a0"/><path d="M0 14h16v3H0z" fill="#fff"/></svg>
<div class="a" style="left:683px;top:733px;width:21px;height:22px;background:#3c3c3c"></div>
<svg style="left:693px;top:744px" width="11" height="11"><path d="M0 0h11L0 11z" fill="#ffd400"/></svg>
<div class="a" style="left:718px;top:725px;width:38px;height:38px;border-radius:4px;background:#8a8a8a"></div>
<svg style="left:725px;top:733px" width="23" height="23" viewBox="0 0 24 24"><circle cx="12" cy="12" r="12" fill="#1a4b86"/><path d="M12 0a12 12 0 0 1 0 24z" fill="#0d6bb1"/><path d="M0 13l7 3 6-5" stroke="#fff" stroke-width="2.600" fill="none"/><circle cx="15.500" cy="9" r="3.400" fill="none" stroke="#fff" stroke-width="1.800"/></svg>
<div class="a" style="left:733px;top:761px;width:6px;height:2px;background:#444"></div>

<svg style="left:1094px;top:741px" width="11" height="7"><path d="M.7 6 5.500 1l4.800 5" fill="none" stroke="#ddd" stroke-width="1.100"/></svg>
<svg style="left:1123px;top:736px" width="16" height="17" viewBox="0 0 18 20"><path d="M8 0l8 3v6c0 5-3 8-8 10C3 17 0 14 0 9V3z" fill="#28a5e8"/><path d="M8 0v19C3 17 0 14 0 9V3z" fill="#0c70c8"/><path d="M11.500 8L18 20H5z" fill="#ffc107"/><path d="M11.500 12v4M11.500 17v1.500" stroke="#111" stroke-width="1.200"/></svg>
<svg style="left:1158px;top:736px" width="12" height="18" fill="none" stroke="#ddd" stroke-width="1"><rect x="1.500" y=".5" width="5" height="4"/><rect x=".5" y="4.500" width="7" height="12" rx="1"/><path d="M6 14l2 2 3-4"/></svg>
<svg style="left:1187px;top:738px" width="17" height="14" fill="none" stroke="#ddd" stroke-width="1.100"><path d="M.7 4.500a11 11 0 0 1 15.600 0M3 7.300a7.500 7.500 0 0 1 11 0M5.500 10a3.500 3.500 0 0 1 6 0"/><circle cx="8.500" cy="12.500" r=".7" fill="#ddd"/></svg>
<svg style="left:1211px;top:738px" width="15" height="14" fill="none" stroke="#ddd" stroke-width="1"><path d="M.5 5v4h3L7 12.500v-11L3.500 5z"/><path d="M9.500 4.500c1.200 1.500 1.200 3.500 0 5M12 2.500c2.200 2.800 2.200 6.200 0 9"/></svg>
<svg style="left:1235px;top:736px" width="18" height="16"><rect x=".8" y="4.800" width="14" height="9" rx="1.500" fill="none" stroke="#ddd" stroke-width="1"/><rect x="2.500" y="6.500" width="10" height="5.600" fill="#ddd"/><path d="M5 1l-1.500 4.500H7L5.500 9" fill="none" stroke="#ddd"/></svg>
<div class="t" style="left:1272px;top:731px;font-size:12px;color:#a8a8a8;letter-spacing:.1px">11:24 AM</div>
<div class="t" style="left:1267px;top:747px;font-size:12px;color:#8e8e8e;letter-spacing:.1px">2/19/2025</div>
<svg style="left:1332px;top:735px" width="15" height="18" fill="none" stroke="#ddd" stroke-width="1.200"><path d="M1 13c1.500-1 1.500-3 1.500-6a4 4 0 0 1 8 0c0 3 0 5 1.500 6z"/><path d="M5 16h3" stroke-width="1.600"/><path d="M4.500 6h3.500l-3.500 4.500H8M10.500 1h3.500l-3.500 3.500h3.500" stroke-width=".9"/></svg>
</body></html>
